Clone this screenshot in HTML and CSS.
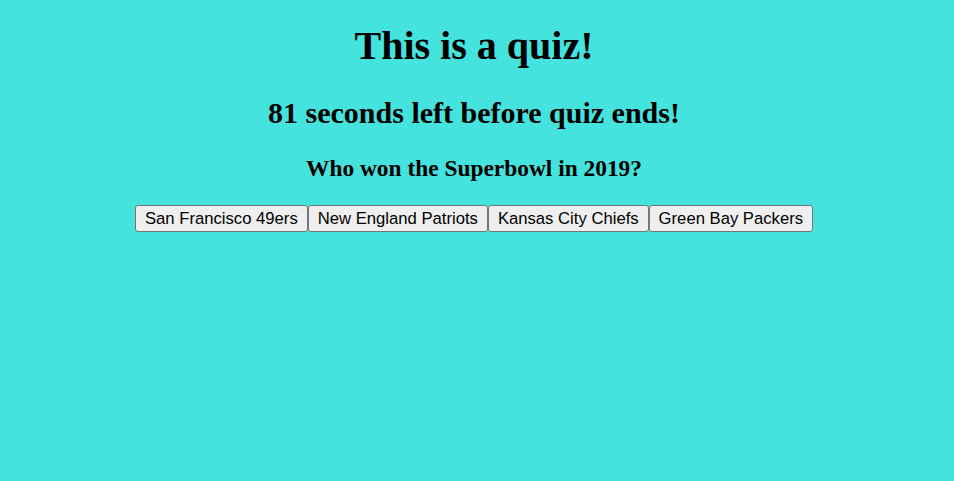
FILE: index.html
```html
<!DOCTYPE html>
<html lang="en">
<head>
<meta charset="utf-8">
<title>Quiz</title>
<link rel="stylesheet" href="styles.css">
</head>
<body>
<main class="quiz">
<h1 class="title">This is a quiz!</h1>
<h2 class="timer">81 seconds left before quiz ends!</h2>
<h3 class="question">Who won the Superbowl in 2019?</h3>
<div class="answers"><button class="answer">San Francisco 49ers</button><button class="answer">New England Patriots</button><button class="answer">Kansas City Chiefs</button><button class="answer">Green Bay Packers</button></div>
</main>
</body>
</html>
```
FILE: styles.css
```css
html, body {
  height: 100%;
}
body {
  margin: 0 16px 0 10px;
  background: #45e3dd;
  color: #000;
  font-family: "Liberation Serif", "Times New Roman", serif;
}
.quiz {
  text-align: center;
  padding-top: 23px;
}
.title {
  font-size: 40px;
  line-height: 1.15;
  font-weight: bold;
  margin: 0 0 27px;
}
.timer {
  font-size: 30px;
  line-height: 1.15;
  font-weight: bold;
  margin: 0 0 24px;
}
.question {
  font-size: 23.4px;
  line-height: 1.15;
  font-weight: bold;
  margin: 0 0 24px;
}
.answers {
  display: flex;
  justify-content: center;
}
.answer {
  font-family: "Liberation Sans", Arial, sans-serif;
  font-size: 16.67px;
  line-height: 19px;
  color: #000;
  background: #efefef;
  border: 1px solid #767676;
  border-radius: 3px;
  padding: 3px 9px;
  margin: 0;
}
```
